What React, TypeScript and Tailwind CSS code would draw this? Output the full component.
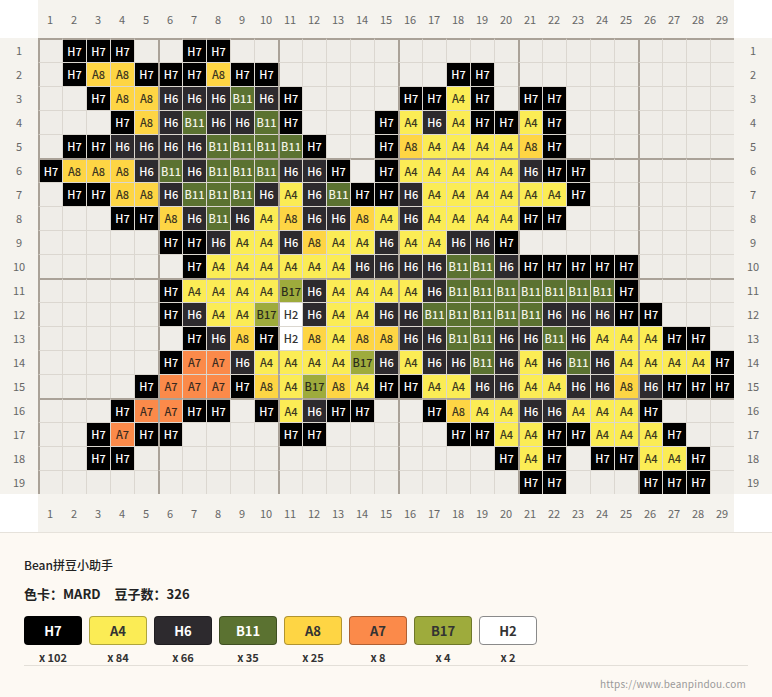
import React from 'react'

type Bead = { bg: string; fg: string; swatchFg: string }

const BEADS: Record<string, Bead> = {
  H7: { bg: '#000000', fg: '#ffffff', swatchFg: '#ffffff' },
  A4: { bg: '#fbec55', fg: '#3a3720', swatchFg: '#333333' },
  H6: { bg: '#2d2a2e', fg: '#ffffff', swatchFg: '#ffffff' },
  B11: { bg: '#5b7231', fg: '#f2f2e6', swatchFg: '#ffffff' },
  A8: { bg: '#fed544', fg: '#3a3320', swatchFg: '#333333' },
  A7: { bg: '#fb8a4a', fg: '#3a2a20', swatchFg: '#333333' },
  B17: { bg: '#9eab3c', fg: '#2b2b1c', swatchFg: '#333333' },
  H2: { bg: '#ffffff', fg: '#333333', swatchFg: '#333333' },
}

const COLS = 29

// one string per row, "." = empty, padded to 29 on the right
const PATTERN = [
  '. H7 H7 H7 . . H7 H7',
  '. H7 A8 A8 H7 H7 H7 A8 H7 H7 . . . . . . . H7 H7',
  '. . H7 A8 A8 H6 H6 H6 B11 H6 H7 . . . . H7 H7 A4 H7 . H7 H7',
  '. . . H7 A8 H6 B11 H6 H6 B11 H7 . . . H7 A4 H6 A4 H7 H7 A4 H7',
  '. H7 H7 H6 H6 H6 H6 B11 B11 B11 B11 H7 . . H7 A8 A4 A4 A4 A4 A8 H7',
  'H7 A8 A8 A8 H6 B11 H6 B11 B11 B11 H6 H6 H7 . H7 A4 A4 A4 A4 A4 H6 H7 H7',
  '. H7 H7 A8 A8 H6 B11 B11 B11 H6 A4 H6 B11 H7 H7 H6 A4 A4 A4 A4 A4 A4 H7',
  '. . . H7 H7 A8 H6 B11 H6 A4 A8 H6 H6 A8 A4 H6 A4 A4 A4 A4 H7 H7',
  '. . . . . H7 H7 H6 A4 A4 H6 A8 A4 A4 H6 A4 A4 H6 H6 H7',
  '. . . . . . H7 A4 A4 A4 A4 A4 A4 H6 H6 H6 H6 B11 B11 H6 H7 H7 H7 H7 H7',
  '. . . . . H7 A4 A4 A4 A4 B17 H6 A4 A4 A4 A4 H6 B11 B11 B11 B11 B11 B11 B11 H7',
  '. . . . . H7 H6 A4 A4 B17 H2 H6 A4 A4 H6 H6 B11 B11 B11 B11 B11 H6 H6 H6 H7 H7',
  '. . . . . . H7 H6 A8 H7 H2 A8 A4 A8 A8 H6 H6 B11 B11 H6 H6 B11 H6 A4 A4 A4 H7 H7',
  '. . . . . H7 A7 A7 H6 A4 A4 A4 A4 B17 H6 A4 H6 H6 B11 H6 A4 H6 B11 H6 A4 A4 A4 A4 H7',
  '. . . . H7 A7 A7 A7 H7 A8 A4 B17 A8 A4 H7 H7 A4 A4 H6 H6 A4 A4 H6 H6 A8 H6 H7 H7 H7',
  '. . . H7 A7 A7 H7 H7 . H7 A4 H6 H7 H7 . . H7 A8 A4 A4 H6 H6 A4 A4 A4 H7',
  '. . H7 A7 H7 H7 . . . . H7 H7 . . . . . H7 H7 A4 A4 H7 H7 A4 A4 A4 H7',
  '. . H7 H7 . . . . . . . . . . . . . . . H7 A4 H7 . H7 H7 A4 A4 H7',
  '. . . . . . . . . . . . . . . . . . . . H7 H7 . . . H7 H7 H7',
].map((row) => {
  const cells = row.split(/\s+/)
  while (cells.length < COLS) cells.push('.')
  return cells
})

const LEGEND: [string, number][] = [
  ['H7', 102],
  ['A4', 84],
  ['H6', 66],
  ['B11', 35],
  ['A8', 25],
  ['A7', 8],
  ['B17', 4],
  ['H2', 2],
]

const FONT = { fontFamily: '"Noto Sans CJK SC", "Noto Sans", sans-serif' }
const numbers = Array.from({ length: COLS }, (_, i) => i + 1)

function ColumnHeader() {
  return (
    <div className="flex h-[38px]">
      <div className="w-[38px] shrink-0 bg-white" />
      {numbers.map((n) => (
        <div key={n} className="flex w-[24px] shrink-0 items-center justify-center bg-[#f5f3ee] text-[11px] text-[#666]">
          {n}
        </div>
      ))}
      <div className="w-[38px] shrink-0 bg-white" />
    </div>
  )
}

function Cell({ code, col, row }: { code: string; col: number; row: number }) {
  const bead = BEADS[code]
  const thickL = col % 5 === 0
  const thickT = row % 5 === 0
  return (
    <div
      className={`flex h-[24px] w-[24px] shrink-0 items-center justify-center text-[11px] font-medium leading-none ${
        thickL ? 'border-l-2 border-l-[#aaa298]' : 'border-l border-l-[#dbd7d0]'
      } ${thickT ? 'border-t-2 border-t-[#aaa298]' : 'border-t border-t-[#dbd7d0]'}`}
      style={{ backgroundColor: bead ? bead.bg : '#efede8', color: bead ? bead.fg : undefined }}
    >
      {bead ? code : ''}
    </div>
  )
}

function Board() {
  return (
    <div>
      <ColumnHeader />
      {PATTERN.map((cells, r) => (
        <div key={r} className="flex h-[24px]">
          <div className="flex w-[38px] shrink-0 items-center justify-center bg-[#f5f3ee] text-[11px] text-[#666]">
            {r + 1}
          </div>
          {cells.map((code, c) => (
            <Cell key={c} code={code} col={c} row={r} />
          ))}
          <div className="flex w-[38px] shrink-0 items-center justify-center bg-[#f5f3ee] text-[11px] text-[#666]">
            {r + 1}
          </div>
        </div>
      ))}
      <ColumnHeader />
    </div>
  )
}

function Legend() {
  return (
    <div className="border-t border-[#e6e2db] bg-[#fdf9f3] px-[24px] pt-[24px]">
      <p className="text-[12px] leading-[16px] font-medium text-[#222]">Bean拼豆小助手</p>
      <p className="mt-[12px] flex text-[13px] leading-[18px] font-bold text-[#222]">
        <span>色卡：MARD</span>
        <span className="ml-[14px]">豆子数：326</span>
      </p>
      <div className="mt-[13px] flex gap-[7px]">
        {LEGEND.map(([code, count]) => {
          const bead = BEADS[code]
          return (
            <div key={code} className="flex w-[58px] flex-col items-center">
              <div
                className={`flex h-[29px] w-full items-center justify-center rounded-[4px] border text-[13px] font-semibold ${
                  code === 'H2' ? 'border-[#8a8a8a]' : 'border-black/30'
                }`}
                style={{ backgroundColor: bead.bg, color: bead.swatchFg }}
              >
                {code}
              </div>
              <span className="mt-[5px] text-[11px] leading-[14px] font-semibold text-[#333]">x {count}</span>
            </div>
          )
        })}
      </div>
      <div className="mt-px border-t border-[#e3dfd8]" />
      <p className="mt-[11px] pb-[6px] pr-[2px] text-right text-[10px] leading-[14px] tracking-[0.02em] text-[#9a9a9a]">
        https://www.beanpindou.com
      </p>
    </div>
  )
}

export default function App() {
  return (
    <div className="w-[772px] bg-white" style={FONT}>
      <Board />
      <Legend />
    </div>
  )
}
